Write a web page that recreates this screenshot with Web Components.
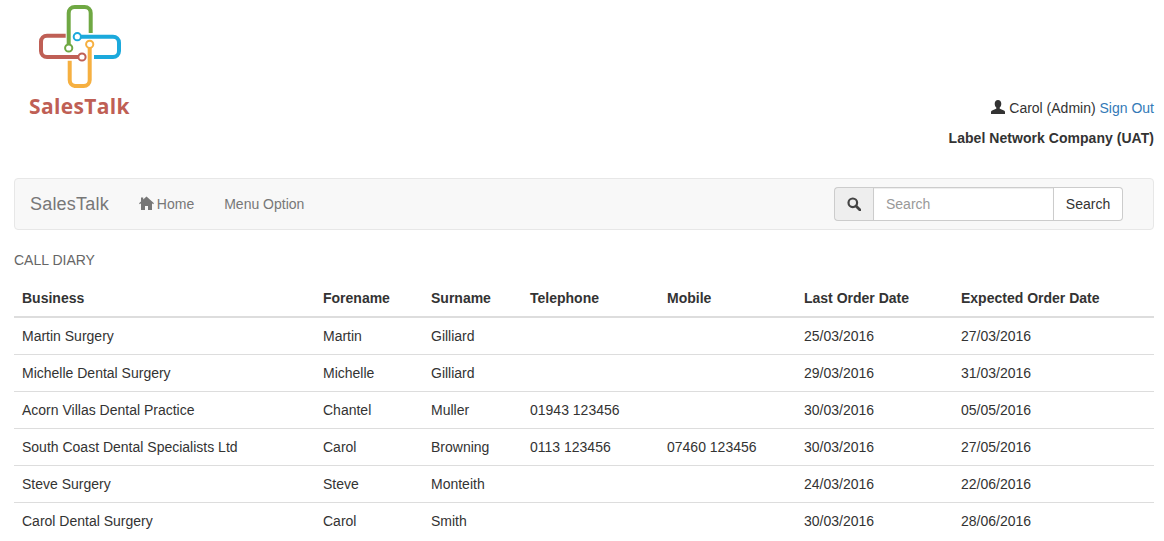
<!DOCTYPE html>
<html>
<head>
<meta charset="utf-8">
<title>SalesTalk</title>
<style>
  html, body { margin: 0; padding: 0; background: #fff; }
  body { font-family: "Liberation Sans", Arial, sans-serif; font-size: 14px; color: #333; line-height: 20px; padding: 0 10px 0 14px; overflow: hidden; height: 541px; box-sizing: border-box; }
</style>
</head>
<body>
<site-header user="Carol (Admin)" company="Label Network Company (UAT)"></site-header>
<main-nav brand="SalesTalk"></main-nav>
<call-diary heading="CALL DIARY"></call-diary>

<script>
class SiteHeader extends HTMLElement {
  constructor() {
    super();
    this.attachShadow({ mode: "open" });
  }

  connectedCallback() {
    const user = this.getAttribute("user") || "";
    const company = this.getAttribute("company") || "";

    this.shadowRoot.innerHTML = `
      <style>
        :host { display: flex; justify-content: space-between; height: 178px; }
        .logo { display: flex; flex-direction: column; width: 116px; }
        .logo svg { display: block; width: 116px; height: 94px; }
        .name { font: 700 21px/24px "Open Sans", sans-serif; color: #bf5f55; margin: 0 0 0 15px; letter-spacing: .35px; white-space: nowrap; }
        .account { padding-top: 98px; text-align: right; }
        .account p { margin: 0 0 10px; }
        .user { display: flex; justify-content: flex-end; align-items: center; gap: 4px; }
        .user svg { width: 14px; height: 14px; margin-top: -2px; }
        a { color: #337ab7; text-decoration: none; }
        b { font-weight: 700; letter-spacing: .04px; }
      </style>
      <div class="logo">
        <svg viewBox="14 0 116 94" fill="none" stroke-width="4">
          <path d="M68.700 44V13a6 6 0 0 1 6-6h10a6 6 0 0 1 6 6v20" stroke="#6fa843"/>
          <path d="M65.700 35.700H47a6 6 0 0 0-6 6V51a6 6 0 0 0 6 6h31" stroke="#bf5f55"/>
          <path d="M81 36.700h32a6 6 0 0 1 6 6V51a6 6 0 0 1-6 6H94" stroke="#1ba9dc"/>
          <path d="M89.700 48v32a6 6 0 0 1-6 6h-9a6 6 0 0 1-5-6V60.700" stroke="#f6b041"/>
          <circle cx="68.700" cy="48" r="3.600" stroke="#6fa843" stroke-width="2" fill="#fff"/>
          <circle cx="77.300" cy="36.700" r="3.600" stroke="#1ba9dc" stroke-width="2" fill="#fff"/>
          <circle cx="89.700" cy="44.300" r="3.600" stroke="#f6b041" stroke-width="2" fill="#fff"/>
          <circle cx="82" cy="57" r="3.600" stroke="#bf5f55" stroke-width="2" fill="#fff"/>
        </svg>
        <span class="name">SalesTalk</span>
      </div>
      <div class="account">
        <p class="user">
          <svg viewBox="0 0 14 14"><path fill="#333" d="M7 0c2 0 3.300 1.500 3.300 3.800 0 1.500-.6 3-1.500 3.800-.3.3-.3.9.1 1.100l4 1.800c.7.3 1.100.8 1.100 1.500V14H0v-2c0-.7.4-1.200 1.100-1.500l4-1.800c.4-.2.4-.8.1-1.100-.9-.8-1.500-2.300-1.500-3.800C3.700 1.500 5 0 7 0z"/></svg>
          <span>${user} <a href="#">Sign Out</a></span>
        </p>
        <p><b>${company}</b></p>
      </div>
    `;
  }
}

class MainNav extends HTMLElement {
  constructor() {
    super();
    this.attachShadow({ mode: "open" });
  }

  connectedCallback() {
    const brand = this.getAttribute("brand") || "";

    this.shadowRoot.innerHTML = `
      <style>
        :host { display: flex; align-items: center; box-sizing: border-box; height: 52px; background: #f8f8f8; border: 1px solid #e7e7e7; border-radius: 4px; padding: 0 30px 0 15px; color: #777; }
        .brand { font-size: 18px; letter-spacing: .2px; margin-right: 30px; }
        .link { display: flex; align-items: center; gap: 3px; margin-right: 30px; }
        .link svg { width: 15px; height: 14px; margin-top: -3px; }
        form { display: flex; margin-left: auto; height: 34px; font-size: 14px; }
        .addon { display: flex; align-items: center; justify-content: center; box-sizing: border-box; width: 39px; background: #eee; border: 1px solid #ccc; border-right: 0; border-radius: 4px 0 0 4px; }
        .addon svg { width: 14px; height: 14px; }
        .field { box-sizing: border-box; width: 181px; border: 1px solid #ccc; padding: 0 12px; background: #fff; color: #999; font: inherit; line-height: 32px; box-shadow: inset 0 1px 1px rgba(0,0,0,.075); outline: 0; }
        .field::placeholder { color: #999; opacity: 1; }
        button { box-sizing: border-box; width: 69px; border: 1px solid #ccc; border-left: 0; border-radius: 0 4px 4px 0; background: #fff; color: #333; font: inherit; padding: 0; }
      </style>
      <span class="brand">${brand}</span>
      <span class="link">
        <svg viewBox="0 0 15 14"><path fill="#777" d="M7.500 0.500 15 7.300l-.9 1-1.100-1V14H9V10H6V14H2V7.300l-1.100 1-.9-1 2-1.800V1.500h2.200v2L7.500.5z"/></svg>
        Home
      </span>
      <span class="link">Menu Option</span>
      <form>
        <span class="addon">
          <svg viewBox="0 0 14 14" fill="none" stroke="#444"><circle cx="5.800" cy="5.800" r="4.300" stroke-width="2.200"/><path d="M9 9l4 4" stroke-width="2.800" stroke-linecap="round"/></svg>
        </span>
        <input class="field" placeholder="Search">
        <button type="button">Search</button>
      </form>
    `;
  }
}

class CallDiary extends HTMLElement {
  constructor() {
    super();
    this.attachShadow({ mode: "open" });
  }

  get rows() {
    return [
      ["Martin Surgery", "Martin", "Gilliard", "", "", "25/03/2016", "27/03/2016"],
      ["Michelle Dental Surgery", "Michelle", "Gilliard", "", "", "29/03/2016", "31/03/2016"],
      ["Acorn Villas Dental Practice", "Chantel", "Muller", "01943 123456", "", "30/03/2016", "05/05/2016"],
      ["South Coast Dental Specialists Ltd", "Carol", "Browning", "0113 123456", "07460 123456", "30/03/2016", "27/05/2016"],
      ["Steve Surgery", "Steve", "Monteith", "", "", "24/03/2016", "22/06/2016"],
      ["Carol Dental Surgery", "Carol", "Smith", "", "", "30/03/2016", "28/06/2016"],
    ];
  }

  connectedCallback() {
    const heading = this.getAttribute("heading") || "";
    const headers = ["Business", "Forename", "Surname", "Telephone", "Mobile", "Last Order Date", "Expected Order Date"];

    this.shadowRoot.innerHTML = `
      <style>
        :host { display: block; }
        h1 { margin: 20px 0 0; font-size: 14px; font-weight: 400; line-height: 20px; color: #666; }
        table { width: 1140px; border-collapse: collapse; table-layout: fixed; margin-top: 9px; }
        th, td { padding: 8px; text-align: left; line-height: 20px; height: 20px; }
        th { font-weight: 700; border-bottom: 2px solid #ddd; height: 21px; }
        td { border-bottom: 1px solid #ddd; }
        tr:last-child td { border-bottom: 0; }
      </style>
      <h1>${heading}</h1>
      <table>
        <colgroup>
          <col style="width:301px"><col style="width:108px"><col style="width:99px">
          <col style="width:137px"><col style="width:137px"><col style="width:157px"><col>
        </colgroup>
        <thead><tr>${headers.map((h) => `<th>${h}</th>`).join("")}</tr></thead>
        <tbody>
          ${this.rows.map((row) => `<tr>${row.map((c) => `<td>${c}</td>`).join("")}</tr>`).join("")}
        </tbody>
      </table>
    `;
  }
}

customElements.define("site-header", SiteHeader);
customElements.define("main-nav", MainNav);
customElements.define("call-diary", CallDiary);
</script>
</body>
</html>
